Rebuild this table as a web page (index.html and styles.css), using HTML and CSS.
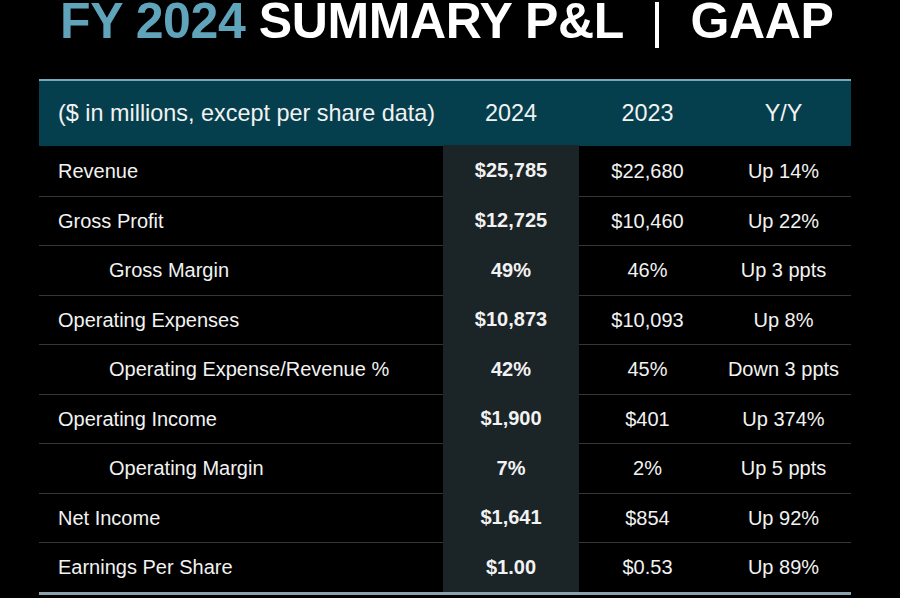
FILE: index.html
```html
<!DOCTYPE html>
<html>
<head>
<meta charset="utf-8">
<link rel="stylesheet" href="styles.css">
</head>
<body>
<div class="slide">
  <h1 class="title"><span class="accent">FY 2024</span> SUMMARY P&amp;L <span class="pipe">|</span> GAAP</h1>
  <div class="table">
    <div class="row head">
      <div class="cell label">($ in millions, except per share data)</div>
      <div class="cell">2024</div>
      <div class="cell">2023</div>
      <div class="cell">Y/Y</div>
    </div>
    <div class="row">
      <div class="cell label">Revenue</div>
      <div class="cell hl">$25,785</div>
      <div class="cell">$22,680</div>
      <div class="cell">Up 14%</div>
    </div>
    <div class="row">
      <div class="cell label">Gross Profit</div>
      <div class="cell hl">$12,725</div>
      <div class="cell">$10,460</div>
      <div class="cell">Up 22%</div>
    </div>
    <div class="row">
      <div class="cell label sub">Gross Margin</div>
      <div class="cell hl">49%</div>
      <div class="cell">46%</div>
      <div class="cell">Up 3 ppts</div>
    </div>
    <div class="row">
      <div class="cell label">Operating Expenses</div>
      <div class="cell hl">$10,873</div>
      <div class="cell">$10,093</div>
      <div class="cell">Up 8%</div>
    </div>
    <div class="row">
      <div class="cell label sub">Operating Expense/Revenue %</div>
      <div class="cell hl">42%</div>
      <div class="cell">45%</div>
      <div class="cell">Down 3 ppts</div>
    </div>
    <div class="row">
      <div class="cell label">Operating Income</div>
      <div class="cell hl">$1,900</div>
      <div class="cell">$401</div>
      <div class="cell">Up 374%</div>
    </div>
    <div class="row">
      <div class="cell label sub">Operating Margin</div>
      <div class="cell hl">7%</div>
      <div class="cell">2%</div>
      <div class="cell">Up 5 ppts</div>
    </div>
    <div class="row">
      <div class="cell label">Net Income</div>
      <div class="cell hl">$1,641</div>
      <div class="cell">$854</div>
      <div class="cell">Up 92%</div>
    </div>
    <div class="row last">
      <div class="cell label">Earnings Per Share</div>
      <div class="cell hl">$1.00</div>
      <div class="cell">$0.53</div>
      <div class="cell">Up 89%</div>
    </div>
  </div>
</div>
</body>
</html>
```
FILE: styles.css
```css
html, body {
  margin: 0;
  padding: 0;
  background: #000;
}
.slide {
  width: 900px;
  height: 598px;
  overflow: hidden;
  background: #000;
  font-family: "Liberation Sans", Arial, sans-serif;
  color: #f2f2f2;
}
.title {
  margin: 0;
  padding: 0 0 0 60px;
  height: 79px;
  font-size: 50px;
  font-weight: bold;
  line-height: 43px;
  color: #ffffff;
  white-space: nowrap;
  letter-spacing: -0.4px;
}
.accent {
  color: #5fa4ba;
}
.pipe {
  font-weight: normal;
  margin: 0 14px;
}
.table {
  margin-left: 39px;
  width: 812px;
  border-bottom: 3px solid #8aa3ab;
}
.row {
  display: grid;
  grid-template-columns: 404px 136px 137px 135px;
  height: 49.5px;
  border-top: 1px solid #363636;
  box-sizing: border-box;
}
.row.head {
  height: 67px;
  background: #053f4d;
  border-top: 2px solid #7aa8b5;
}
.row.head .cell {
  font-size: 23.4px;
  font-weight: normal;
}
.row.head + .row {
  border-top: none;
}
.cell {
  display: flex;
  align-items: center;
  justify-content: center;
  font-size: 20px;
  padding-top: 1px;
  white-space: nowrap;
}
.row.head .cell {
  padding-top: 0;
}
.cell.label {
  justify-content: flex-start;
  padding-left: 19px;
}
.cell.label.sub {
  padding-left: 70px;
}
.cell.hl {
  background: #1b2427;
  font-weight: bold;
}
.row:not(.head) .cell.hl {
  margin-top: -1px;
}
```
